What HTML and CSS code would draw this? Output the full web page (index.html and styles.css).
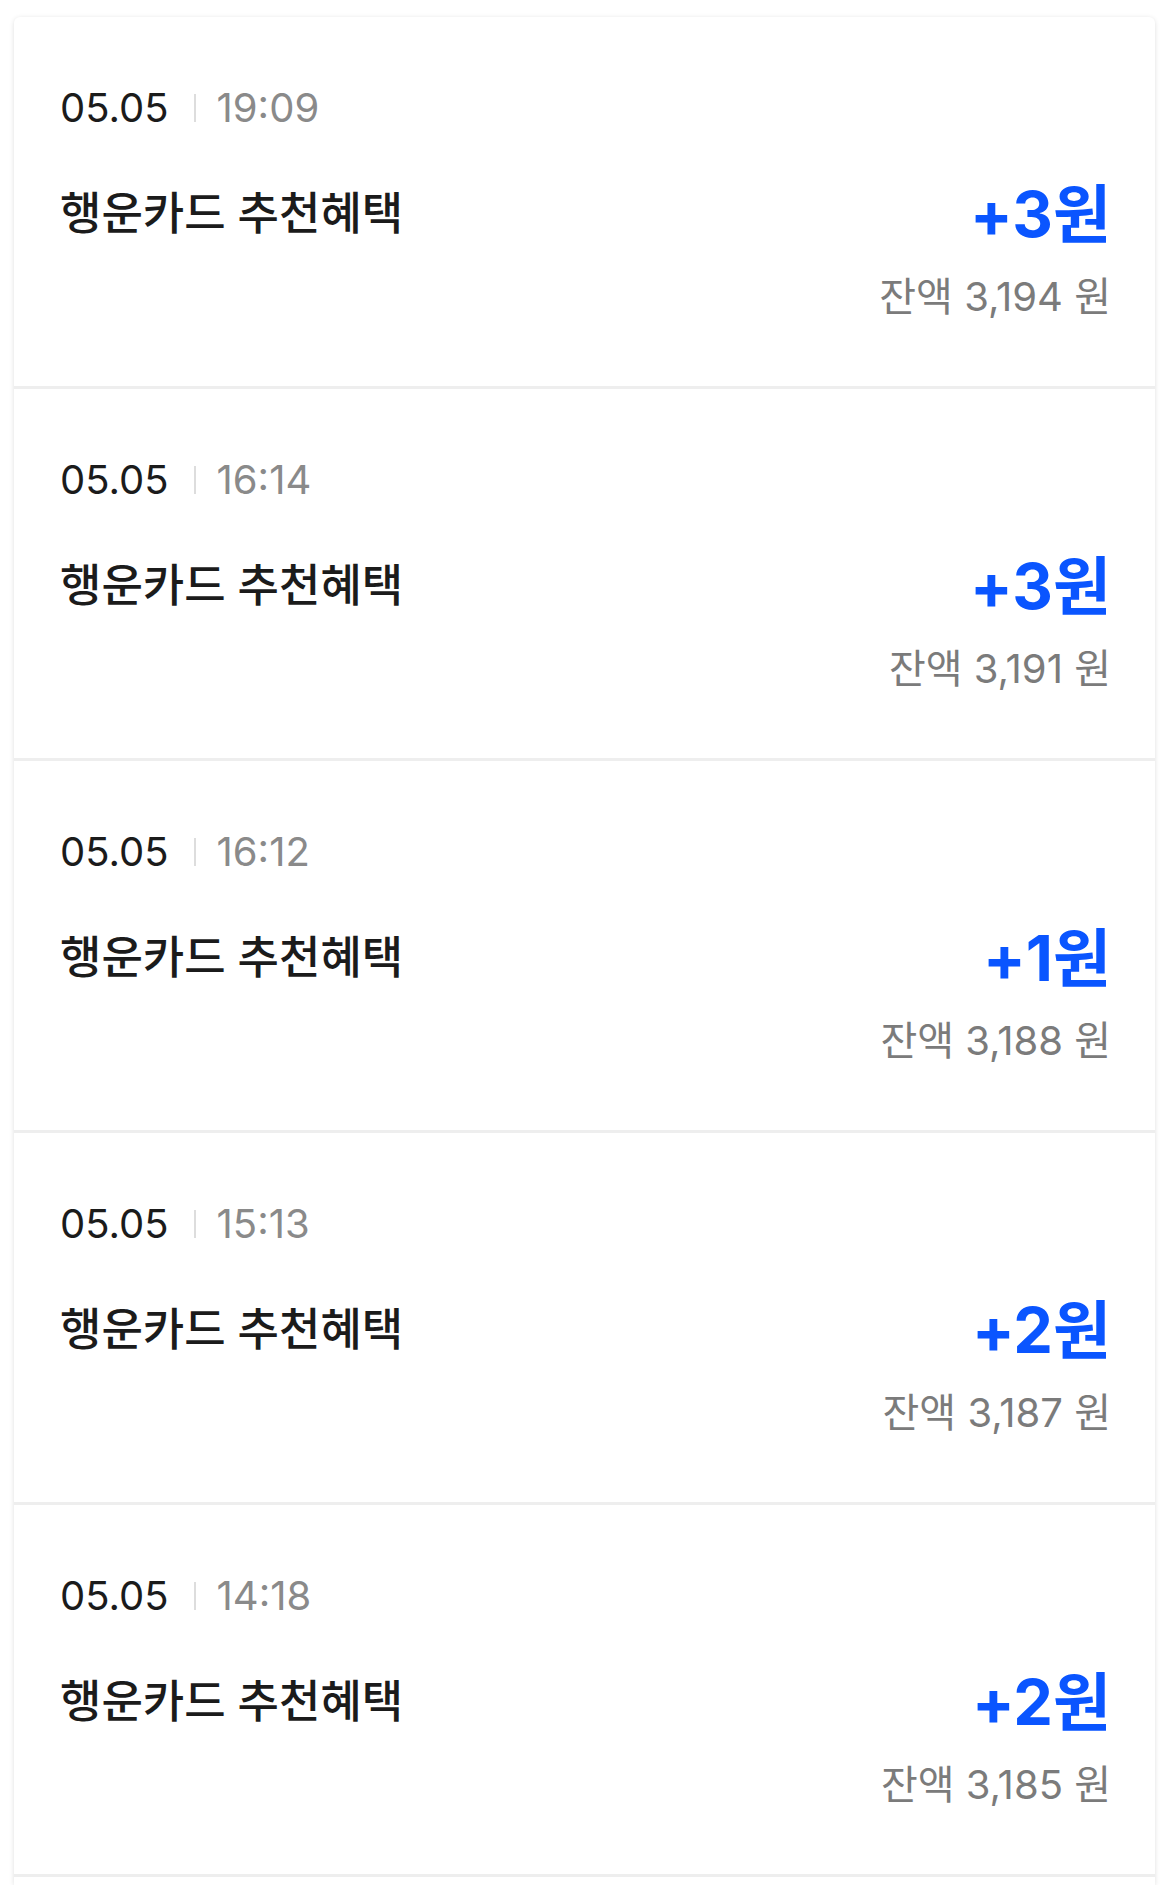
FILE: index.html
```html
<!DOCTYPE html>
<html lang="ko">
<head>
<meta charset="utf-8">
<link rel="stylesheet" href="styles.css">
</head>
<body>
<div class="list">
  <div class="item">
    <div class="when"><span class="date">05.05</span><span class="bar"></span><span class="time">19:09</span></div>
    <div class="main"><span class="title">행운카드 추천혜택</span><span class="amount">+3원</span></div>
    <div class="balance">잔액 3,194 원</div>
  </div>
  <div class="item">
    <div class="when"><span class="date">05.05</span><span class="bar"></span><span class="time">16:14</span></div>
    <div class="main"><span class="title">행운카드 추천혜택</span><span class="amount">+3원</span></div>
    <div class="balance">잔액 3,191 원</div>
  </div>
  <div class="item">
    <div class="when"><span class="date">05.05</span><span class="bar"></span><span class="time">16:12</span></div>
    <div class="main"><span class="title">행운카드 추천혜택</span><span class="amount">+1원</span></div>
    <div class="balance">잔액 3,188 원</div>
  </div>
  <div class="item">
    <div class="when"><span class="date">05.05</span><span class="bar"></span><span class="time">15:13</span></div>
    <div class="main"><span class="title">행운카드 추천혜택</span><span class="amount">+2원</span></div>
    <div class="balance">잔액 3,187 원</div>
  </div>
  <div class="item">
    <div class="when"><span class="date">05.05</span><span class="bar"></span><span class="time">14:18</span></div>
    <div class="main"><span class="title">행운카드 추천혜택</span><span class="amount">+2원</span></div>
    <div class="balance">잔액 3,185 원</div>
  </div>
  <div class="tail"></div>
</div>
</body>
</html>
```
FILE: styles.css
```css
html, body {
  margin: 0;
  padding: 0;
  background: #ffffff;
}
body {
  font-family: Inter, "Noto Sans CJK KR", sans-serif;
  padding: 17px 15px 0 14px;
}
.list {
  width: 1141px;
  background: #fff;
  border-radius: 6px 6px 0 0;
  box-shadow: 0 1px 5px rgba(0, 0, 0, 0.13);
}
.item {
  padding: 67px 44px 0 46px;
  height: 302px;
  border-bottom: 3px solid #eeeeee;
  display: flex;
  flex-direction: column;
}
.when {
  display: flex;
  align-items: center;
  height: 48px;
  font-size: 40px;
  line-height: 48px;
}
.date {
  color: #1b1b1b;
}
.bar {
  width: 2px;
  height: 28px;
  background: #dddddd;
  margin: 0 21px 0 25px;
}
.time {
  color: #8a8a8a;
}
.main {
  margin-top: 42px;
  height: 80px;
  display: flex;
  align-items: center;
  justify-content: space-between;
}
.title {
  font-size: 45px;
  font-weight: 500;
  color: #1b1b1b;
  line-height: 60px;
}
.amount {
  font-size: 63px;
  font-weight: 700;
  color: #0a55ff;
  line-height: 80px;
}
.balance {
  margin-top: 19px;
  text-align: right;
  font-size: 40px;
  line-height: 48px;
  color: #7b7b7b;
}
.tail {
  height: 8px;
}
```
